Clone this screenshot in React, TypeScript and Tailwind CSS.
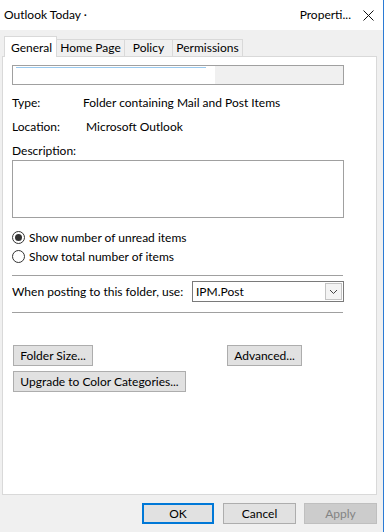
import React from "react";

const font = { fontFamily: "Lato, 'Noto Sans', sans-serif" };

const Radio: React.FC<{ checked?: boolean; label: string }> = ({ checked, label }) => (
  <div className="flex items-center h-[19px]">
    <span className="w-[13px] h-[13px] shrink-0 rounded-full border border-[#333333] bg-white flex items-center justify-center">
      {checked && <span className="w-[7px] h-[7px] rounded-full bg-[#333333]" />}
    </span>
    <span className="ml-[4px] whitespace-nowrap">{label}</span>
  </div>
);

const Btn: React.FC<{ label: string; w: string; className?: string }> = ({ label, w, className }) => (
  <button
    className={`h-[21px] ${w} bg-[#e1e1e1] border border-[#adadad] text-[12px] text-black whitespace-nowrap flex items-center justify-center ${className ?? ""}`}
  >
    {label}
  </button>
);

const App: React.FC = () => {
  return (
    <div
      className="w-[384px] h-[532px] flex flex-col border-r border-[#2b7bd4] text-[12px] text-black bg-[#f0f0f0] whitespace-nowrap"
      style={font}
    >
      {/* Barra de título */}
      <div className="h-[30px] bg-white flex items-center pl-[4px] pr-[9px]">
        <span>Outlook Today ·</span>
        <span className="ml-auto">Properti...</span>
        <svg className="ml-[12px]" width="11" height="11" viewBox="0 0 11 11">
          <path d="M0.5 0.5 L10.5 10.5 M10.5 0.5 L0.5 10.5" stroke="#111" strokeWidth="1" fill="none" />
        </svg>
      </div>

      {/* Pestañas */}
      <div className="flex items-end pt-[6px] pl-[4px] relative z-10">
        <div className="h-[21px] w-[53px] bg-white border border-b-0 border-[#d9d9d9] flex items-start pt-[2px] pl-[6px]">
          General
        </div>
        <div className="h-[17px] w-[69px] -ml-px mb-px border border-[#d9d9d9] border-b-0 flex items-center justify-center">
          Home Page
        </div>
        <div className="h-[17px] w-[49px] -ml-px mb-px border border-[#d9d9d9] border-b-0 flex items-center justify-center">
          Policy
        </div>
        <div className="h-[17px] w-[71px] -ml-px mb-px border border-[#d9d9d9] border-b-0 flex items-center justify-center">
          Permissions
        </div>
      </div>

      {/* Panel */}
      <div className="ml-[2px] -mt-px w-[375px] h-[439px] bg-white border border-[#d9d9d9] pl-[9px] pt-[8px]">
        <div className="w-[332px] h-[20px] border border-[#a0a0a0] flex">
          <div className="w-[202px] bg-white pt-px pl-[3px]">
            <div className="h-px w-[190px] bg-[#99c9ef]" />
          </div>
          <div className="flex-1 bg-[#f0f0f0]" />
        </div>

        <div className="mt-[6px] h-[24px] flex items-center">
          <span className="w-[71px]">Type:</span>
          <span>Folder containing Mail and Post Items</span>
        </div>
        <div className="h-[24px] flex items-center">
          <span className="w-[74px]">Location:</span>
          <span>Microsoft Outlook</span>
        </div>
        <div className="h-[20px] flex items-end leading-[16px]">Description:</div>
        <div className="mt-px w-[332px] h-[58px] border border-[#a0a0a0] bg-white" />

        <div className="mt-[10px]">
          <Radio checked label="Show number of unread items" />
          <Radio label="Show total number of items" />
        </div>

        <div className="mt-[9px] w-[331px] h-px bg-[#a0a0a0]" />

        <div className="mt-[5px] w-[332px] h-[21px] flex items-center justify-between">
          <span>When posting to this folder, use:</span>
          <div className="w-[152px] h-[21px] shrink-0 border border-[#7a7a7a] bg-white flex items-center pl-[3px] pr-px">
            <span>IPM.Post</span>
            <div className="ml-auto w-[17px] h-[17px] border border-[#c4c4c4] bg-[#f4f4f4] flex items-center justify-center">
              <svg width="9" height="6" viewBox="0 0 9 6">
                <path d="M1 1 L4.5 4.5 L8 1" stroke="#444" strokeWidth="1" fill="none" />
              </svg>
            </div>
          </div>
        </div>

        <div className="mt-[10px] w-[331px] h-px bg-[#a0a0a0]" />

        <div className="mt-[32px] ml-px flex">
          <Btn label="Folder Size..." w="w-[80px]" />
          <Btn label="Advanced..." w="w-[75px]" className="ml-[134px]" />
        </div>
        <div className="mt-[5px] ml-px flex">
          <Btn label="Upgrade to Color Categories..." w="w-[173px]" />
        </div>
      </div>

      {/* Botones inferiores */}
      <div className="mt-[8px] flex justify-end pr-[6px]">
        <button className="h-[21px] w-[72px] bg-[#e1e1e1] border-2 border-[#0078d7] flex items-center justify-center">
          OK
        </button>
        <button className="ml-[9px] h-[21px] w-[73px] bg-[#e1e1e1] border border-[#adadad] flex items-center justify-center">
          Cancel
        </button>
        <button className="ml-[8px] h-[21px] w-[73px] bg-[#cccccc] border border-[#bfbfbf] text-[#838383] flex items-center justify-center">
          Apply
        </button>
      </div>
    </div>
  );
};

export default App;
